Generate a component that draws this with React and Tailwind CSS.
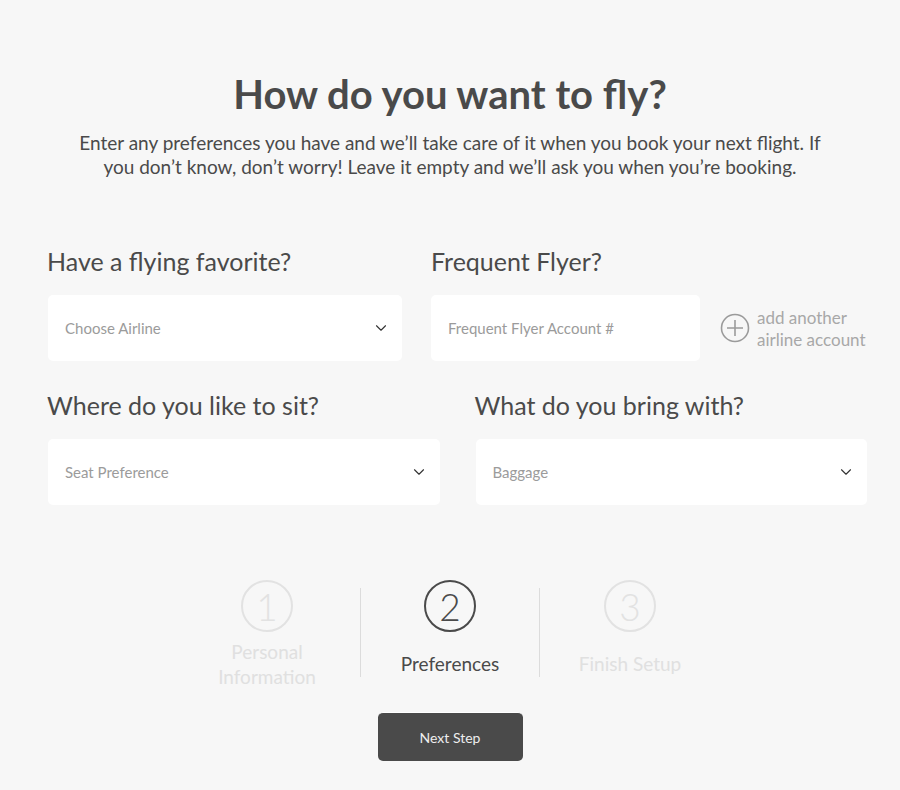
import { ChevronDown } from "lucide-react";

const font = { fontFamily: "Lato, 'Open Sans', sans-serif" };

function SelectBox({ placeholder }) {
    return (
        <div className="flex h-[66px] items-center justify-between rounded-[5px] bg-white pl-[17px] pr-[12px]">
            <span className="text-[15px] text-[#9b9b9b]">{placeholder}</span>
            <ChevronDown className="h-[18px] w-[18px] text-[#333]" strokeWidth={1.5} />
        </div>
    );
}

function Step({ num, label, active, width }) {
    return (
        <div className={`flex flex-col items-center ${width}`}>
            <div
                className={`flex h-[52px] w-[52px] items-center justify-center rounded-full border-2 text-[37px] font-light leading-none ${active
                    ? "border-[#4a4a4a] text-[#4a4a4a]"
                    : "border-[#e2e2e2] text-[#e2e2e2]"
                    }`}
            >
                {num}
            </div>
            <div
                className={`flex h-[63px] items-center text-center text-[19px] leading-[25px] ${active ? "text-[#4a4a4a]" : "text-[#e0e0e0]"
                    }`}
            >
                {label}
            </div>
        </div>
    );
}

export default function App() {
    return (
        <div style={font} className="min-h-[790px] w-full bg-[#f7f7f7] text-[#4a4a4a]">
            {/* Header */}
            <div className="flex flex-col items-center pt-[70px]">
                <h1 className="text-[40px] font-bold leading-[48px]">How do you want to fly?</h1>
                <p className="mt-[13px] w-[760px] text-center text-[19px] leading-[24px]">
                    Enter any preferences you have and we’ll take care of it when you book your next flight. If
                    <br />
                    you don’t know, don’t worry! Leave it empty and we’ll ask you when you’re booking.
                </p>
            </div>

            {/* Form */}
            <div className="ml-[47px] mt-[66px] w-[820px]">
                <div className="flex">
                    <div className="w-[355px]">
                        <h2 className="text-[25px] leading-[32px]">Have a flying favorite?</h2>
                        <div className="mt-[18px] pl-[1px]">
                            <SelectBox placeholder="Choose Airline" />
                        </div>
                    </div>
                    <div className="ml-[29px]">
                        <h2 className="text-[25px] leading-[32px]">Frequent Flyer?</h2>
                        <div className="mt-[18px] flex items-center">
                            <div className="flex h-[66px] w-[269px] items-center rounded-[5px] bg-white pl-[17px] text-[15px] text-[#9b9b9b]">
                                Frequent Flyer Account #
                            </div>
                            <svg className="ml-[20px] h-[30px] w-[30px]" viewBox="0 0 30 30" fill="none" stroke="#9b9b9b" strokeWidth="1.6">
                                <circle cx="15" cy="15" r="13.5" />
                                <path d="M15 7v16M7 15h16" />
                            </svg>
                            <div className="ml-[7px] pt-[2px] text-[17px] leading-[22px] text-[#a8a8a8]">
                                add another
                                <br />
                                airline account
                            </div>
                        </div>
                    </div>
                </div>

                <div className="mt-[28px] grid grid-cols-2 gap-[35px]">
                    <div>
                        <h2 className="text-[25px] leading-[32px]">Where do you like to sit?</h2>
                        <div className="mt-[18px] pl-[1px]">
                            <SelectBox placeholder="Seat Preference" />
                        </div>
                    </div>
                    <div>
                        <h2 className="text-[25px] leading-[32px]">What do you bring with?</h2>
                        <div className="mt-[18px] pl-[1px]">
                            <SelectBox placeholder="Baggage" />
                        </div>
                    </div>
                </div>
            </div>

            {/* Steps */}
            <div className="mt-[75px] flex justify-center">
                <div className="flex items-start">
                    <Step num="1" label={<span>Personal<br />Information</span>} width="w-[180px] pr-[6px]" />
                    <div className="mt-[8px] h-[89px] w-px bg-[#dcdcdc]" />
                    <Step num="2" label="Preferences" active width="w-[178px]" />
                    <div className="mt-[8px] h-[89px] w-px bg-[#dcdcdc]" />
                    <Step num="3" label="Finish Setup" width="w-[180px]" />
                </div>
            </div>

            <div className="mt-[17px] flex justify-center pb-[28px]">
                <button className="h-[49px] w-[145px] rounded-[5px] border-t border-white bg-[#4a4a4a] text-[14px] text-[#eeeeee]">
                    Next Step
                </button>
            </div>
        </div>
    );
}
